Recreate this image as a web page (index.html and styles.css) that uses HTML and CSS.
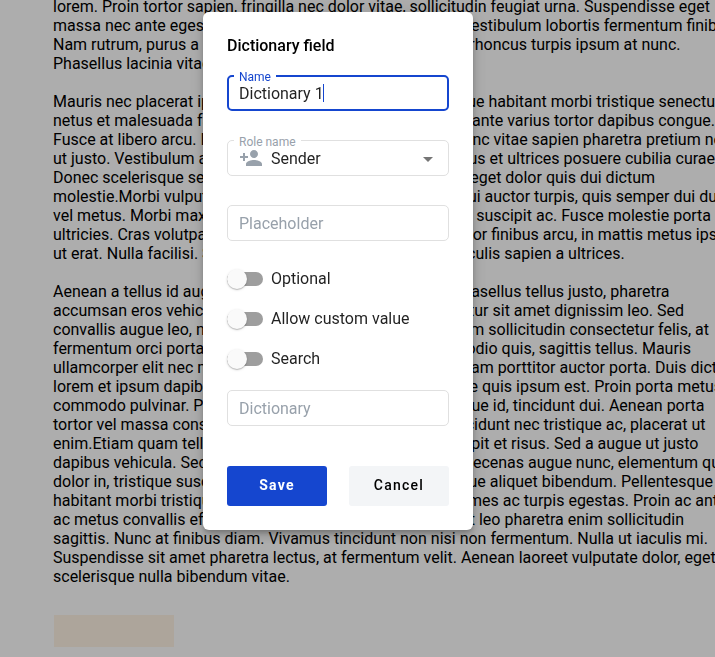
FILE: index.html
```html
<!DOCTYPE html>
<html lang="en">
<head>
<meta charset="utf-8">
<title>Dictionary field</title>
<link rel="stylesheet" href="styles.css">
</head>
<body>
<main class="document">
  <div class="para">
    <div class="line">lorem. Proin tortor sapien, fringilla nec dolor vitae, sollicitudin feugiat urna. Suspendisse eget</div>
    <div class="line"><span>massa nec ante egestas</span><span class="end e717">vestibulum lobortis fermentum finib</span></div>
    <div class="line"><span>Nam rutrum, purus a</span><span class="end e680">rhoncus turpis ipsum at nunc.</span></div>
    <div class="line">Phasellus lacinia vitae</div>
  </div>
  <div class="para">
    <div class="line"><span>Mauris nec placerat ipsum.</span><span class="end e715">ue habitant morbi tristique senectu</span></div>
    <div class="line"><span>netus et malesuada fames</span><span class="end e714">ante varius tortor dapibus congue.</span></div>
    <div class="line"><span>Fusce at libero arcu. In</span><span class="end e722">nc vitae sapien pharetra pretium ne</span></div>
    <div class="line"><span>ut justo. Vestibulum ante</span><span class="end e715">us et ultrices posuere cubilia curae</span></div>
    <div class="line"><span>Donec scelerisque sem</span><span class="end e654">eget dolor quis dui dictum</span></div>
    <div class="line"><span>molestie.Morbi vulputate</span><span class="end e717">ui auctor turpis, quis semper dui du</span></div>
    <div class="line"><span>vel metus. Morbi maximus</span><span class="end e711">suscipit ac. Fusce molestie porta</span></div>
    <div class="line"><span>ultricies. Cras volutpat</span><span class="end e717">or finibus arcu, in mattis metus ips</span></div>
    <div class="line"><span>ut erat. Nulla facilisi. Sed</span><span class="end e625">culis sapien a ultrices.</span></div>
  </div>
  <div class="para">
    <div class="line"><span>Aenean a tellus id augue</span><span class="end e669">asellus tellus justo, pharetra</span></div>
    <div class="line"><span>accumsan eros vehicula</span><span class="end e683">tur sit amet dignissim leo. Sed</span></div>
    <div class="line"><span>convallis augue leo, nec</span><span class="end e709">m sollicitudin consectetur felis, at</span></div>
    <div class="line"><span>fermentum orci porta</span><span class="end e691">odio quis, sagittis tellus. Mauris</span></div>
    <div class="line"><span>ullamcorper elit nec ma</span><span class="end e717">am porttitor auctor porta. Duis dict</span></div>
    <div class="line"><span>lorem et ipsum dapibus</span><span class="end e722">e quis ipsum est. Proin porta metus</span></div>
    <div class="line"><span>commodo pulvinar. Proin</span><span class="end e704">ue id, tincidunt dui. Aenean porta</span></div>
    <div class="line"><span>tortor vel massa consequat</span><span class="end e705">cidunt nec tristique ac, placerat ut</span></div>
    <div class="line"><span>enim.Etiam quam tellus</span><span class="end e698">pit et risus. Sed a augue ut justo</span></div>
    <div class="line"><span>dapibus vehicula. Sed</span><span class="end e720">ecenas augue nunc, elementum qu</span></div>
    <div class="line"><span>dolor in, tristique suscipit</span><span class="end e712">ue aliquet bibendum. Pellentesque</span></div>
    <div class="line"><span>habitant morbi tristique</span><span class="end e718">mes ac turpis egestas. Proin ac ant</span></div>
    <div class="line"><span>ac metus convallis efficitur</span><span class="end e683">t leo pharetra enim sollicitudin</span></div>
    <div class="line">sagittis. Nunc at finibus diam. Vivamus tincidunt non nisi non fermentum. Nulla ut iaculis mi.</div>
    <div class="line">Suspendisse sit amet pharetra lectus, at fermentum velit. Aenean laoreet vulputate dolor, eget</div>
    <div class="line">scelerisque nulla bibendum vitae.</div>
  </div>
  <div class="doc-field"></div>
</main>

<div class="backdrop">
  <form class="dialog">
    <h1 class="title">Dictionary field</h1>
    <div class="field focused">
      <span class="label">Name</span>
      <span class="value">Dictionary 1</span><span class="caret"></span>
    </div>
    <div class="field select">
      <span class="label">Role name</span>
      <svg class="person" width="24" height="24" viewBox="0 0 24 24"><path d="M15 12c2.21 0 4-1.79 4-4s-1.79-4-4-4-4 1.790-4 4 1.790 4 4 4zm-9-2V7H4v3H1v2h3v3h2v-3h3v-2H6zm9 4c-2.670 0-8 1.340-8 4v2h16v-2c0-2.660-5.330-4-8-4z"/></svg>
      <span class="value">Sender</span>
      <svg class="arrow" width="10" height="5" viewBox="0 0 10 5"><path d="M0 0h10L5 5z"/></svg>
    </div>
    <div class="field"><span class="hint">Placeholder</span></div>
    <div class="toggles">
      <div class="toggle"><span class="switch"><span class="bar"></span><span class="thumb"></span></span>Optional</div>
      <div class="toggle"><span class="switch"><span class="bar"></span><span class="thumb"></span></span>Allow custom value</div>
      <div class="toggle"><span class="switch"><span class="bar"></span><span class="thumb"></span></span>Search</div>
    </div>
    <div class="field"><span class="hint">Dictionary</span></div>
    <div class="actions">
      <button type="button" class="btn primary">Save</button>
      <button type="button" class="btn">Cancel</button>
    </div>
  </form>
</div>
</body>
</html>
```
FILE: styles.css
```css
* { box-sizing: border-box; }

body {
  margin: 0;
  height: 657px;
  overflow: hidden;
  background: #fff;
  color: #000;
  font: 16px/19px Roboto, "Liberation Sans", sans-serif;
}

.document {
  width: 715px;
  overflow: hidden;
  margin-top: -3px;
  padding-left: 53px;
}

.para { margin-bottom: 19px; }

.line {
  display: flex;
  width: 700px;
  height: 19px;
  white-space: nowrap;
}

/* right-hand fragments, named after the x where the line ends */
.end { margin-left: auto; }
.e625 { margin-right: 128.300px; }
.e654 { margin-right: 98px; }
.e669 { margin-right: 83.500px; }
.e680 { margin-right: 72.500px; }
.e683 { margin-right: 69px; }
.e691 { margin-right: 62px; }
.e698 { margin-right: 54.500px; }
.e704 { margin-right: 48.500px; }
.e705 { margin-right: 47.500px; }
.e709 { margin-right: 44px; }
.e711 { margin-right: 42px; }
.e712 { margin-right: 40px; }
.e714 { margin-right: 38px; }
.e715 { margin-right: 38px; }
.e717 { margin-right: 36px; }
.e718 { margin-right: 35px; }
.e720 { margin-right: 33px; }
.e722 { margin-right: 31px; }

.doc-field {
  width: 120px;
  height: 32px;
  margin: 29px 0 0 1px;
  background: #fff3e5;
}

.backdrop {
  position: fixed;
  inset: 0;
  display: flex;
  justify-content: center;
  align-items: flex-start;
  padding: 12px 39px 0 0;
  background: rgba(0, 0, 0, .32);
}

.dialog {
  width: 270px;
  height: 518px;
  padding: 24px;
  border-radius: 6px;
  background: #fff;
  box-shadow: 0 3px 5px -1px rgba(0, 0, 0, .2), 0 6px 10px rgba(0, 0, 0, .14), 0 1px 18px rgba(0, 0, 0, .12);
}

.title {
  margin: 0 0 20px;
  font-size: 16px;
  font-weight: 500;
  line-height: 19px;
}

.field {
  position: relative;
  display: flex;
  align-items: center;
  height: 36px;
  margin-bottom: 29px;
  padding: 0 11px;
  border: 1px solid #e0e0e0;
  border-radius: 5px;
  color: rgba(0, 0, 0, .87);
}

.focused {
  padding: 0 10px;
  border: 2px solid #1546cf;
}

.label {
  position: absolute;
  top: -6px;
  left: 6px;
  padding: 0 5px;
  background: #fff;
  color: #98a1ab;
  font-size: 12px;
  line-height: 14px;
}

.focused .label {
  top: -7px;
  left: 5px;
  color: #1546cf;
}

.caret {
  width: 1px;
  height: 18px;
  margin-left: -1px;
  background: #1546cf;
}

.person { fill: #98a1ab; }
.select .value { margin-left: 8px; }
.arrow { margin: 2px 4px 0 auto; fill: #757575; }
.hint { color: #98a1ab; }

.toggles {
  margin: -11px 0 1px;
  padding-bottom: 10px;
}

.toggle {
  display: flex;
  align-items: center;
  height: 40px;
  padding-bottom: 2px;
  color: rgba(0, 0, 0, .87);
}

.switch {
  position: relative;
  display: flex;
  align-items: center;
  width: 36px;
  height: 20px;
  margin: 2px 8px 0 0;
}

.bar {
  width: 36px;
  height: 14px;
  border-radius: 7px;
  background: #9e9e9e;
}

.thumb {
  position: absolute;
  left: 0;
  width: 20px;
  height: 20px;
  border-radius: 50%;
  background: #fafafa;
  box-shadow: 0 1px 1px rgba(0, 0, 0, .2), 0 1px 3px rgba(0, 0, 0, .12);
}

.toggles + .field { margin-bottom: 0; }

.actions {
  display: flex;
  justify-content: space-between;
  margin-top: 40px;
}

.btn {
  width: 100px;
  height: 40px;
  padding: 0 0 2px;
  border: 0;
  border-radius: 3px;
  background: #f3f5f7;
  color: #000;
  font: 500 14px/20px Roboto, sans-serif;
  letter-spacing: 1.250px;
}

.primary {
  background: #1546cf;
  color: #fff;
  font-weight: 700;
}
```
